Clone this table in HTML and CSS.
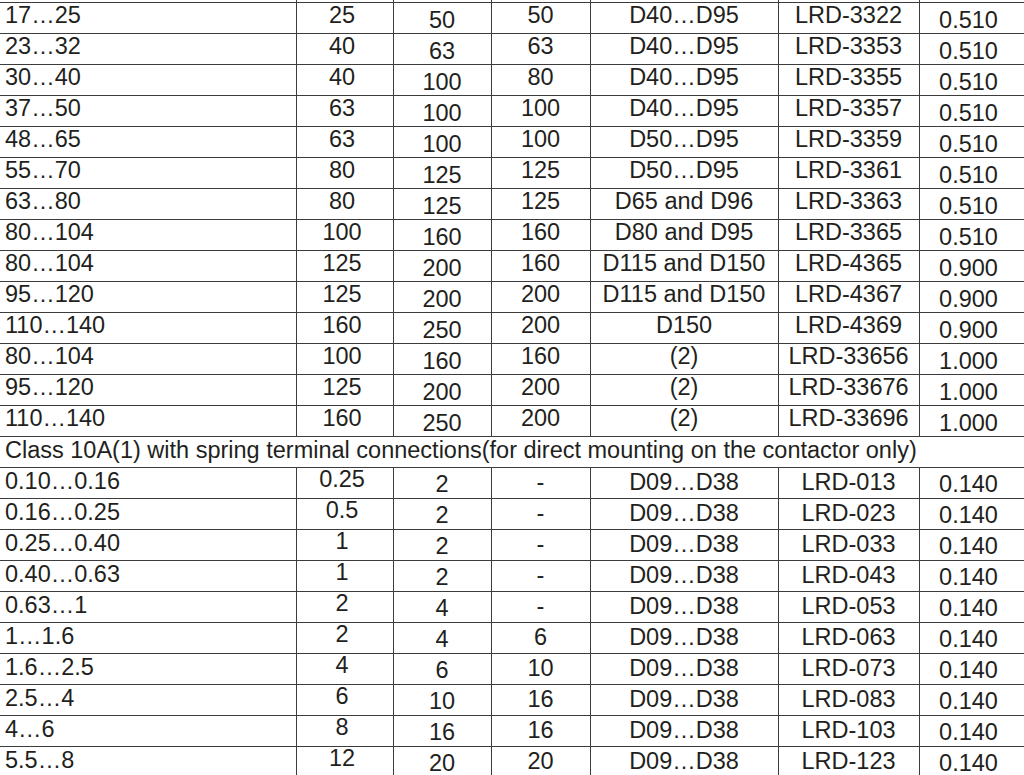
FILE: index.html
```html
<!DOCTYPE html>
<html lang="en">
<head>
<meta charset="utf-8">
<title>LRD thermal overload relays</title>
<link rel="stylesheet" href="styles.css">
</head>
<body>
<table class="spec">
  <colgroup>
    <col class="w1"><col class="w2"><col class="w3"><col class="w4"><col class="w5"><col class="w6"><col class="w7">
  </colgroup>
  <tbody>
    <tr class="stub"><td class="c1"></td><td></td><td></td><td></td><td></td><td></td><td class="c7"></td></tr>
    <tr class="u"><td class="c1">17…25</td><td class="c2">25</td><td class="c3">50</td><td class="c4">50</td><td class="c5">D40…D95</td><td class="c6">LRD-3322</td><td class="c7">0.510</td></tr>
    <tr class="u"><td class="c1">23…32</td><td class="c2">40</td><td class="c3">63</td><td class="c4">63</td><td class="c5">D40…D95</td><td class="c6">LRD-3353</td><td class="c7">0.510</td></tr>
    <tr class="u"><td class="c1">30…40</td><td class="c2">40</td><td class="c3">100</td><td class="c4">80</td><td class="c5">D40…D95</td><td class="c6">LRD-3355</td><td class="c7">0.510</td></tr>
    <tr class="u"><td class="c1">37…50</td><td class="c2">63</td><td class="c3">100</td><td class="c4">100</td><td class="c5">D40…D95</td><td class="c6">LRD-3357</td><td class="c7">0.510</td></tr>
    <tr class="u"><td class="c1">48…65</td><td class="c2">63</td><td class="c3">100</td><td class="c4">100</td><td class="c5">D50…D95</td><td class="c6">LRD-3359</td><td class="c7">0.510</td></tr>
    <tr class="u"><td class="c1">55…70</td><td class="c2">80</td><td class="c3">125</td><td class="c4">125</td><td class="c5">D50…D95</td><td class="c6">LRD-3361</td><td class="c7">0.510</td></tr>
    <tr class="u"><td class="c1">63…80</td><td class="c2">80</td><td class="c3">125</td><td class="c4">125</td><td class="c5">D65 and D96</td><td class="c6">LRD-3363</td><td class="c7">0.510</td></tr>
    <tr class="u"><td class="c1">80…104</td><td class="c2">100</td><td class="c3">160</td><td class="c4">160</td><td class="c5">D80 and D95</td><td class="c6">LRD-3365</td><td class="c7">0.510</td></tr>
    <tr class="u"><td class="c1">80…104</td><td class="c2">125</td><td class="c3">200</td><td class="c4">160</td><td class="c5">D115 and D150</td><td class="c6">LRD-4365</td><td class="c7">0.900</td></tr>
    <tr class="u"><td class="c1">95…120</td><td class="c2">125</td><td class="c3">200</td><td class="c4">200</td><td class="c5">D115 and D150</td><td class="c6">LRD-4367</td><td class="c7">0.900</td></tr>
    <tr class="u"><td class="c1">110…140</td><td class="c2">160</td><td class="c3">250</td><td class="c4">200</td><td class="c5">D150</td><td class="c6">LRD-4369</td><td class="c7">0.900</td></tr>
    <tr class="u"><td class="c1">80…104</td><td class="c2">100</td><td class="c3">160</td><td class="c4">160</td><td class="c5">(2)</td><td class="c6">LRD-33656</td><td class="c7">1.000</td></tr>
    <tr class="u"><td class="c1">95…120</td><td class="c2">125</td><td class="c3">200</td><td class="c4">200</td><td class="c5">(2)</td><td class="c6">LRD-33676</td><td class="c7">1.000</td></tr>
    <tr class="u"><td class="c1">110…140</td><td class="c2">160</td><td class="c3">250</td><td class="c4">200</td><td class="c5">(2)</td><td class="c6">LRD-33696</td><td class="c7">1.000</td></tr>
    <tr class="section"><td colspan="7">Class 10A(1) with spring terminal connections(for direct mounting on the contactor only)</td></tr>
    <tr class="l"><td class="c1">0.10…0.16</td><td class="c2">0.25</td><td class="c3">2</td><td class="c4">-</td><td class="c5">D09…D38</td><td class="c6">LRD-013</td><td class="c7">0.140</td></tr>
    <tr class="l"><td class="c1">0.16…0.25</td><td class="c2">0.5</td><td class="c3">2</td><td class="c4">-</td><td class="c5">D09…D38</td><td class="c6">LRD-023</td><td class="c7">0.140</td></tr>
    <tr class="l"><td class="c1">0.25…0.40</td><td class="c2">1</td><td class="c3">2</td><td class="c4">-</td><td class="c5">D09…D38</td><td class="c6">LRD-033</td><td class="c7">0.140</td></tr>
    <tr class="l"><td class="c1">0.40…0.63</td><td class="c2">1</td><td class="c3">2</td><td class="c4">-</td><td class="c5">D09…D38</td><td class="c6">LRD-043</td><td class="c7">0.140</td></tr>
    <tr class="l"><td class="c1">0.63…1</td><td class="c2">2</td><td class="c3">4</td><td class="c4">-</td><td class="c5">D09…D38</td><td class="c6">LRD-053</td><td class="c7">0.140</td></tr>
    <tr class="l"><td class="c1">1…1.6</td><td class="c2">2</td><td class="c3">4</td><td class="c4">6</td><td class="c5">D09…D38</td><td class="c6">LRD-063</td><td class="c7">0.140</td></tr>
    <tr class="l"><td class="c1">1.6…2.5</td><td class="c2">4</td><td class="c3">6</td><td class="c4">10</td><td class="c5">D09…D38</td><td class="c6">LRD-073</td><td class="c7">0.140</td></tr>
    <tr class="l"><td class="c1">2.5…4</td><td class="c2">6</td><td class="c3">10</td><td class="c4">16</td><td class="c5">D09…D38</td><td class="c6">LRD-083</td><td class="c7">0.140</td></tr>
    <tr class="l"><td class="c1">4…6</td><td class="c2">8</td><td class="c3">16</td><td class="c4">16</td><td class="c5">D09…D38</td><td class="c6">LRD-103</td><td class="c7">0.140</td></tr>
    <tr class="l"><td class="c1">5.5…8</td><td class="c2">12</td><td class="c3">20</td><td class="c4">20</td><td class="c5">D09…D38</td><td class="c6">LRD-123</td><td class="c7">0.140</td></tr>
  </tbody>
</table>
</body>
</html>
```
FILE: styles.css
```css
html, body {
  margin: 0;
  padding: 0;
  background: #ffffff;
  overflow: hidden;
}

.spec {
  border-collapse: collapse;
  table-layout: fixed;
  width: 1030px;
  font-family: "Liberation Sans", Arial, sans-serif;
  font-size: 23.5px;
  line-height: 23px;
  color: #231f20;
}

.w1 { width: 296px; }
.w2 { width: 97px; }
.w3 { width: 98px; }
.w4 { width: 99px; }
.w5 { width: 188px; }
.w6 { width: 141px; }
.w7 { width: 111px; }

.spec td {
  border: 1px solid #3c3c3c;
  padding: 0;
  height: 31px;
  box-sizing: border-box;
  vertical-align: top;
  text-align: center;
  white-space: nowrap;
}

.spec td.c1 {
  border-left: none;
  text-align: left;
  padding-left: 5px;
}

.spec td.c2 { padding-right: 5px; }
.spec td.c7 { padding-right: 12px; }

.stub td {
  height: 2px;
  border-top: none;
}

/* upper block: per-column baseline offsets as in the source print */
.u td { padding-top: 1px; }
.u td.c3, .u td.c7 { padding-top: 6px; }

/* section heading spanning the whole table */
.section td {
  text-align: left;
  padding-left: 5px;
  padding-top: 2px;
  border-left: none;
}

/* lower block offsets */
.l td { padding-top: 3px; }
.l td.c1 { padding-top: 2px; }
.l td.c2 { padding-top: 0; }
.l td.c3 { padding-top: 5px; }
.l td.c7 { padding-top: 5px; }
```
